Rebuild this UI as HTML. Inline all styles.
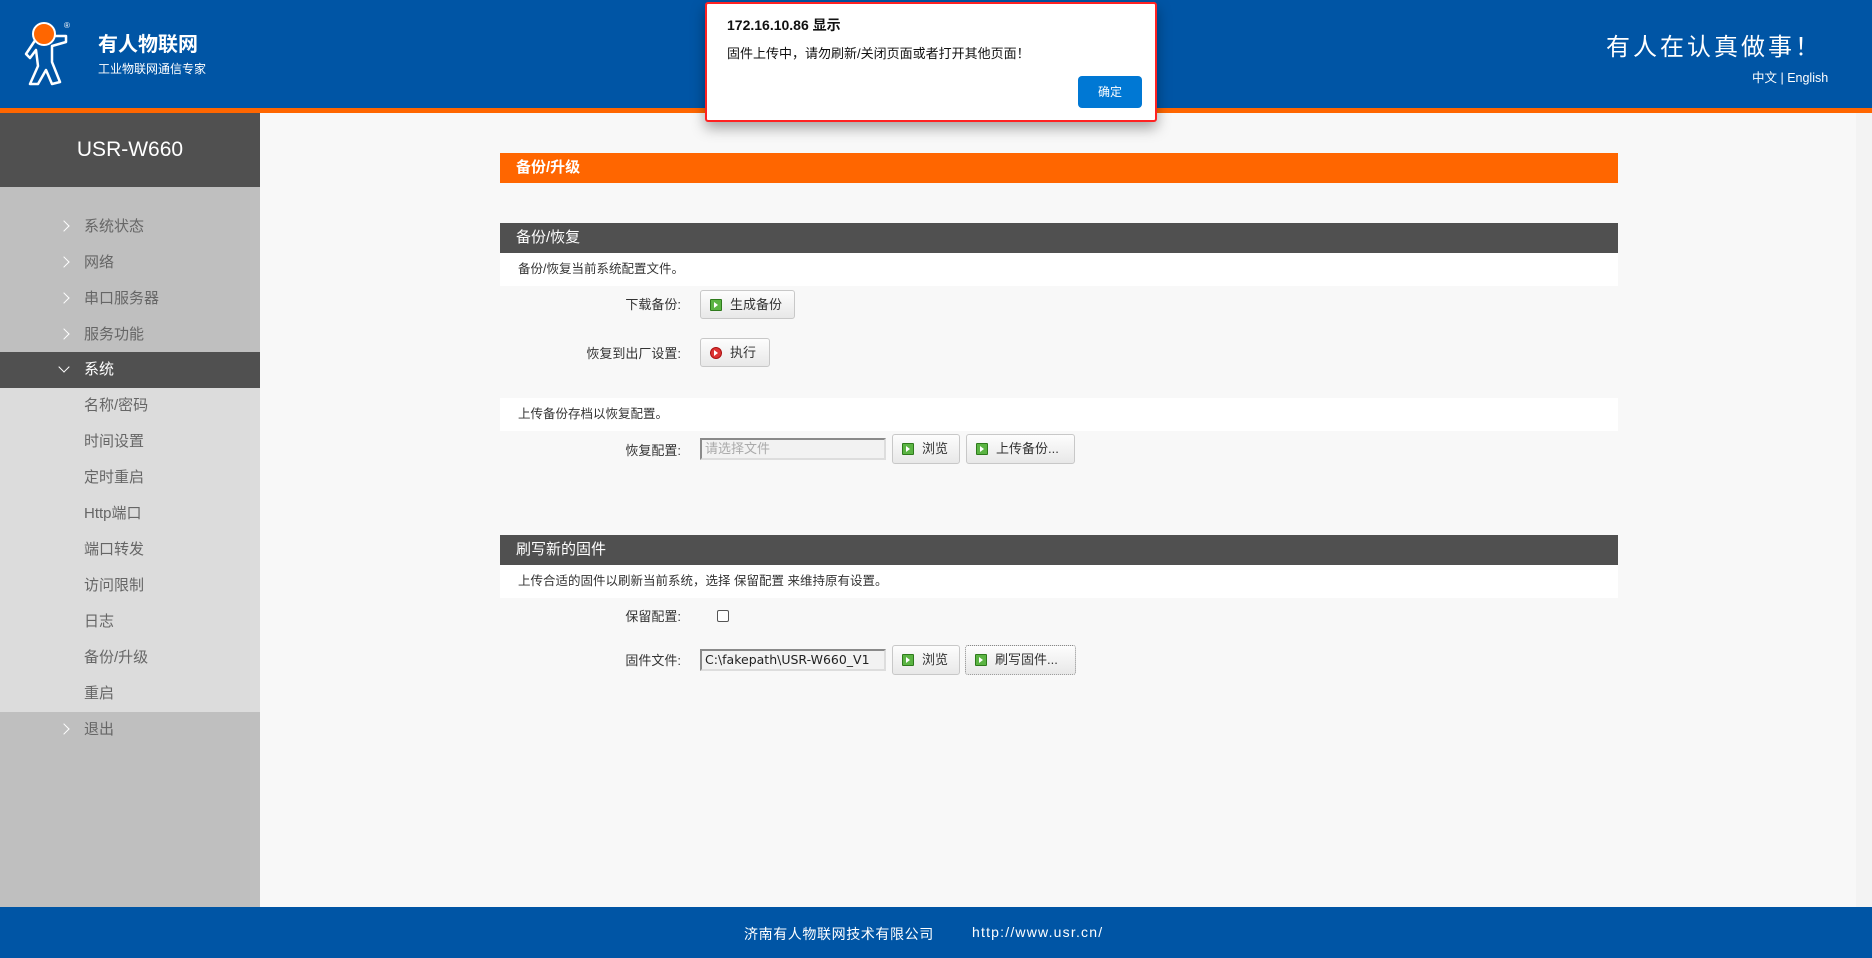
<!DOCTYPE html>
<html><head><meta charset="utf-8">
<style>
*{margin:0;padding:0;box-sizing:border-box}
body{width:1872px;height:958px;overflow:hidden;background:#f8f8f8;font-family:"Liberation Sans","Noto Sans CJK SC",sans-serif;position:relative;color:#333}
.a{position:absolute}
.hdr{left:0;top:0;width:1872px;height:108px;background:#0055a5}
.org{left:0;top:108px;width:1872px;height:5px;background:#ff6600}
.side{left:0;top:113px;width:260px;height:794px;background:#bfbfbf}
.st{left:0;top:113px;width:260px;height:74px;background:#505050;color:#fff;font-size:21px;text-align:center;line-height:74px}
.mi{position:absolute;left:84px;font-size:15px;color:#666;line-height:20px}
.ar{position:absolute;left:60px;width:8px;height:8px;border-top:1.5px solid #fff;border-right:1.5px solid #fff;transform:rotate(45deg)}
.sub{left:0;top:388px;width:260px;height:324px;background:#dcdcdc}
.lbl{position:absolute;font-size:13px;color:#333;text-align:right;width:200px}
.btn{position:absolute;border:1px solid #c8c8c8;border-radius:3px;background:linear-gradient(#fdfdfd,#e8e8e8);font-size:13px;color:#333;line-height:28px}
.ic{position:absolute;left:9px;top:8px;width:12px;height:12px;background:#5bb443;border:1px solid #2e7a1c;border-radius:1px}
.ic:after{content:"";position:absolute;left:3px;top:2px;border-left:4px solid #fff;border-top:3px solid transparent;border-bottom:3px solid transparent}
.sec{position:absolute;left:500px;width:1118px;height:30px;background:#505050;color:#fff;font-size:15px;line-height:30px;padding-left:16px}
.row{position:absolute;left:500px;width:1118px;height:33px;background:#fff;font-size:12.5px;line-height:33px;padding-left:18px;color:#333}
.inp{position:absolute;border:2px solid #8a8a8a;border-right-color:#ddd;border-bottom-color:#ddd;background:#f2f2f2;font-size:13px;line-height:18px;padding-left:3px}
</style></head><body>
<div class="a hdr"></div>
<div class="a org"></div>
<svg class="a" style="left:18px;top:18px" width="58" height="70" viewBox="0 0 58 70">
<path d="M20 18 L8 36 L12 40 L18 32 L20 48 L12 66 L20 66 L28 52 L34 66 L42 64 L34 44 L34 28 L48 24 L48 18 Z" fill="none" stroke="#fff" stroke-width="2.5" stroke-linejoin="round"/>
<circle cx="26" cy="16" r="11" fill="#ff6600" stroke="#fff" stroke-width="2"/>
<text x="46" y="10" fill="#fff" font-size="8" font-family="Liberation Sans">®</text>
</svg>
<div class="a" style="left:98px;top:28px;color:#fff;font-size:20px;font-weight:bold">有人物联网</div>
<div class="a" style="left:98px;top:60px;color:#fff;font-size:12px">工业物联网通信专家</div>
<div class="a" style="left:1606px;top:27px;color:#fff;font-size:24px;letter-spacing:3px">有人在认真做事！</div>
<div class="a" style="left:1752px;top:67px;color:#fff;font-size:12.5px">中文 | English</div>

<div class="a side"></div>
<div class="a st">USR-W660</div>
<div class="a" style="left:0;top:352px;width:260px;height:36px;background:#505050"></div>
<div class="a sub"></div>
<i class="ar" style="top:222px"></i><div class="mi" style="top:217px">系统状态</div>
<i class="ar" style="top:258px"></i><div class="mi" style="top:253px">网络</div>
<i class="ar" style="top:294px"></i><div class="mi" style="top:289px">串口服务器</div>
<i class="ar" style="top:330px"></i><div class="mi" style="top:325px">服务功能</div>
<i class="ar" style="top:363px;transform:rotate(135deg)"></i><div class="mi" style="top:360px;color:#fff">系统</div>
<div class="mi" style="top:396px">名称/密码</div>
<div class="mi" style="top:432px">时间设置</div>
<div class="mi" style="top:468px">定时重启</div>
<div class="mi" style="top:504px">Http端口</div>
<div class="mi" style="top:540px">端口转发</div>
<div class="mi" style="top:576px">访问限制</div>
<div class="mi" style="top:612px">日志</div>
<div class="mi" style="top:648px">备份/升级</div>
<div class="mi" style="top:684px">重启</div>
<i class="ar" style="top:725px"></i><div class="mi" style="top:720px">退出</div>

<div class="a" style="left:1856px;top:113px;width:16px;height:794px;background:#f3f3f3"></div>

<div class="a" style="left:500px;top:153px;width:1118px;height:30px;background:#ff6600;color:#fff;font-size:15px;font-weight:bold;line-height:30px;padding-left:16px">备份/升级</div>

<div class="sec" style="top:223px">备份/恢复</div>
<div class="row" style="top:253px">备份/恢复当前系统配置文件。</div>
<div class="lbl" style="left:481px;top:294px">下载备份:</div>
<div class="btn" style="left:700px;top:290px;width:95px;height:29px;padding-left:29px">生成备份<i class="ic"></i></div>
<div class="lbl" style="left:481px;top:343px">恢复到出厂设置:</div>
<div class="btn" style="left:700px;top:338px;width:70px;height:29px;padding-left:29px">执行<i class="ic" style="background:#d33;border-color:#a11;border-radius:50%"></i></div>
<div class="row" style="top:398px">上传备份存档以恢复配置。</div>
<div class="lbl" style="left:481px;top:440px">恢复配置:</div>
<div class="inp" style="left:700px;top:438px;width:186px;height:22px;color:#aaa">请选择文件</div>
<div class="btn" style="left:892px;top:434px;width:68px;height:30px;padding-left:29px">浏览<i class="ic"></i></div>
<div class="btn" style="left:966px;top:434px;width:109px;height:30px;padding-left:29px">上传备份...<i class="ic"></i></div>

<div class="sec" style="top:535px">刷写新的固件</div>
<div class="row" style="top:565px">上传合适的固件以刷新当前系统，选择 保留配置 来维持原有设置。</div>
<div class="lbl" style="left:481px;top:606px">保留配置:</div>
<div class="a" style="left:717px;top:610px;width:12px;height:12px;border:1px solid #555;border-radius:2px;background:#fff"></div>
<div class="lbl" style="left:481px;top:650px">固件文件:</div>
<div class="inp" style="left:700px;top:649px;width:186px;height:22px;color:#222;font-family:'DejaVu Sans',sans-serif;font-size:12.5px;overflow:hidden;white-space:nowrap">C:\fakepath\USR-W660_V1</div>
<div class="btn" style="left:892px;top:645px;width:68px;height:30px;padding-left:29px">浏览<i class="ic"></i></div>
<div class="btn" style="left:965px;top:645px;width:111px;height:30px;padding-left:29px;border-style:dotted;border-color:#888">刷写固件...<i class="ic"></i></div>

<div class="a" style="left:0;top:907px;width:1872px;height:51px;background:#0055a5"></div>
<div class="a" style="left:744px;top:924px;color:#fff;font-size:14px;letter-spacing:0.6px">济南有人物联网技术有限公司</div>
<div class="a" style="left:972px;top:924px;color:#fff;font-size:14px;letter-spacing:1.2px">http://www.usr.cn/</div>

<div class="a" style="left:705px;top:2px;width:452px;height:120px;background:#fff;border:2px solid #f22;border-radius:3px;box-shadow:0 6px 14px rgba(0,0,0,.35)">
<div class="a" style="left:20px;top:11px;font-size:14px;font-weight:bold;color:#111">172.16.10.86 显示</div>
<div class="a" style="left:20px;top:39px;font-size:13px;color:#111">固件上传中，请勿刷新/关闭页面或者打开其他页面！</div>
<div class="a" style="left:371px;top:72px;width:64px;height:32px;background:#0078d4;border-radius:4px;color:#fff;font-size:12px;line-height:32px;text-align:center">确定</div>
</div>
</body></html>
